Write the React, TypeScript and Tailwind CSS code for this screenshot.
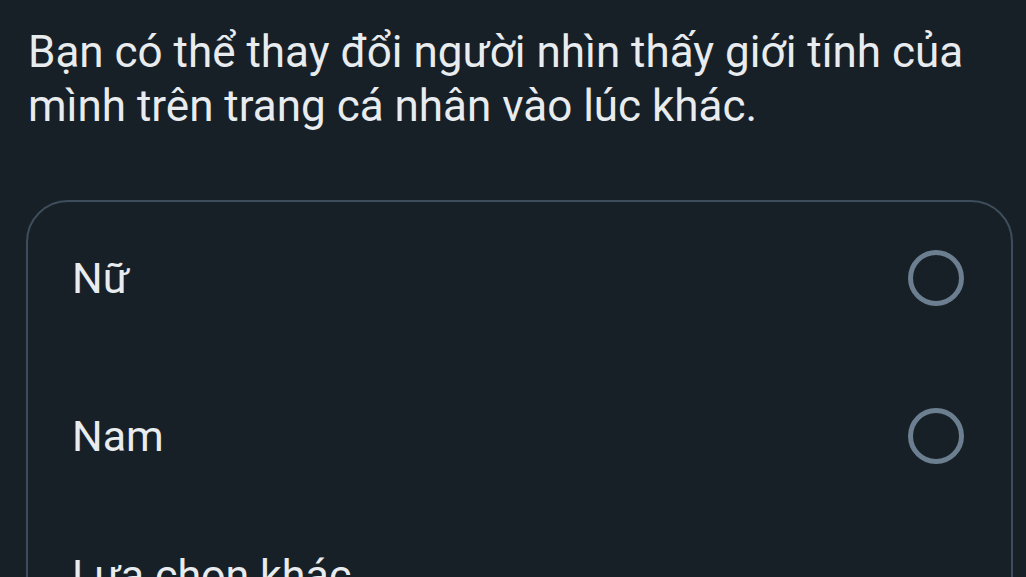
import React from "react";

type Option = { id: string; label: string };

const options: Option[] = [
  { id: "female", label: "Nữ" },
  { id: "male", label: "Nam" },
];

function Radio() {
  return (
    <span className="block h-[56px] w-[56px] rounded-full border-[5px] border-[#6c7f90]" />
  );
}

export default function App() {
  return (
    <div
      className="h-[577px] w-[1026px] overflow-hidden bg-[#182027] text-[#e8ecef]"
      style={{ fontFamily: 'Roboto, "Noto Sans", sans-serif' }}
    >
      <p className="whitespace-nowrap pl-[28px] pt-[25px] text-[44px] leading-[54px]">
        Bạn có thể thay đổi người nhìn thấy giới tính của
        <br />
        mình trên trang cá nhân vào lúc khác.
      </p>

      <div className="ml-[26px] mr-[13px] mt-[67px] rounded-[42px] border-2 border-[#3d4d5b]">
        {options.map((o) => (
          <div
            key={o.id}
            className="flex h-[158px] items-center justify-between pb-[6px] pl-[44px] pr-[47px]"
          >
            <span className="text-[43px] leading-none">{o.label}</span>
            <Radio />
          </div>
        ))}

        {/* lựa chọn khác */}
        <div className="flex items-start justify-between pl-[44px] pr-[47px] pt-[36px] pb-[40px]">
          <span className="text-[43px] leading-none">Lựa chọn khác</span>
        </div>
      </div>
    </div>
  );
}
